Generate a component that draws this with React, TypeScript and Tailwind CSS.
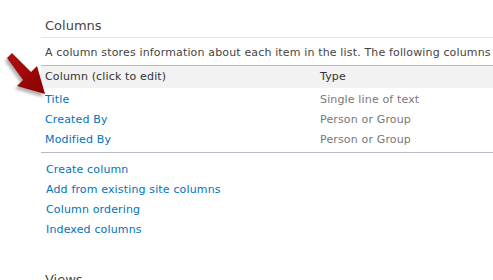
import React from "react";

const rows = [
  { name: "Title", type: "Single line of text" },
  { name: "Created By", type: "Person or Group" },
  { name: "Modified By", type: "Person or Group" },
];

const links = ["Create column", "Add from existing site columns", "Column ordering", "Indexed columns"];

function Arrow() {
  return (
    <svg className="absolute left-0 top-[48px]" width="56" height="54" viewBox="0 0 56 54">
      <defs>
        <linearGradient id="ar" x1="0" y1="0" x2="1" y2="1">
          <stop offset="0" stopColor="#b01010" />
          <stop offset="1" stopColor="#8a0000" />
        </linearGradient>
        <filter id="sh" x="-30%" y="-30%" width="160%" height="160%">
          <feGaussianBlur stdDeviation="1.6" />
        </filter>
      </defs>
      <g transform="translate(-2 3)" opacity="0.45" filter="url(#sh)">
        <path d="M7 10 L12 5 L31 24 L37 18 L45 46 L17 38 L23 32 Z" fill="#555" />
      </g>
      <path d="M7 10 L12 5 L31 24 L37 18 L45 46 L17 38 L23 32 Z" fill="url(#ar)" />
    </svg>
  );
}

export default function App() {
  return (
    <div className="relative w-[493px] h-[280px] overflow-hidden bg-white" style={{ fontFamily: "'DejaVu Sans', Verdana, sans-serif" }}>
      <Arrow />
      <div className="ml-[41px] w-[600px] pt-[17px] tracking-[0.15px]">
        <div className="px-[4px] h-[20px] text-[13px] leading-[18px] text-[#444] tracking-normal">Columns</div>
        <div className="border-b border-[#e4e4e4]" />
        <div className="px-[4px] h-[27px] pt-[8px] text-[11px] leading-[13px] text-[#444] whitespace-nowrap">
          A column stores information about each item in the list. The following columns are currently available in this list:
        </div>
        <div className="border-t border-[#b4b9c3] bg-[#f2f2f2] h-[23px] pt-[4px] flex text-[11px] leading-[13px] text-[#333]">
          <div className="w-[279px] px-[4px]">Column (click to edit)</div>
          <div>Type</div>
        </div>
        <div className="pt-[1px] pb-[3px] border-b border-[#b4b9c3]">
          {rows.map((r) => (
            <div key={r.name} className="h-[20px] pt-[4px] flex text-[11px] leading-[13px]">
              <div className="w-[279px] px-[4px] text-[#0072bc]">{r.name}</div>
              <div className="text-[#777]">{r.type}</div>
            </div>
          ))}
        </div>
        <div className="pt-[6px] pl-[5px]">
          {links.map((l) => (
            <div key={l} className="h-[20px] pt-[4px] text-[11px] leading-[13px] text-[#0072bc]">{l}</div>
          ))}
        </div>
        <div className="pt-[31px] px-[4px] text-[13px] leading-[19px] text-[#444] tracking-normal">Views</div>
      </div>
    </div>
  );
}
